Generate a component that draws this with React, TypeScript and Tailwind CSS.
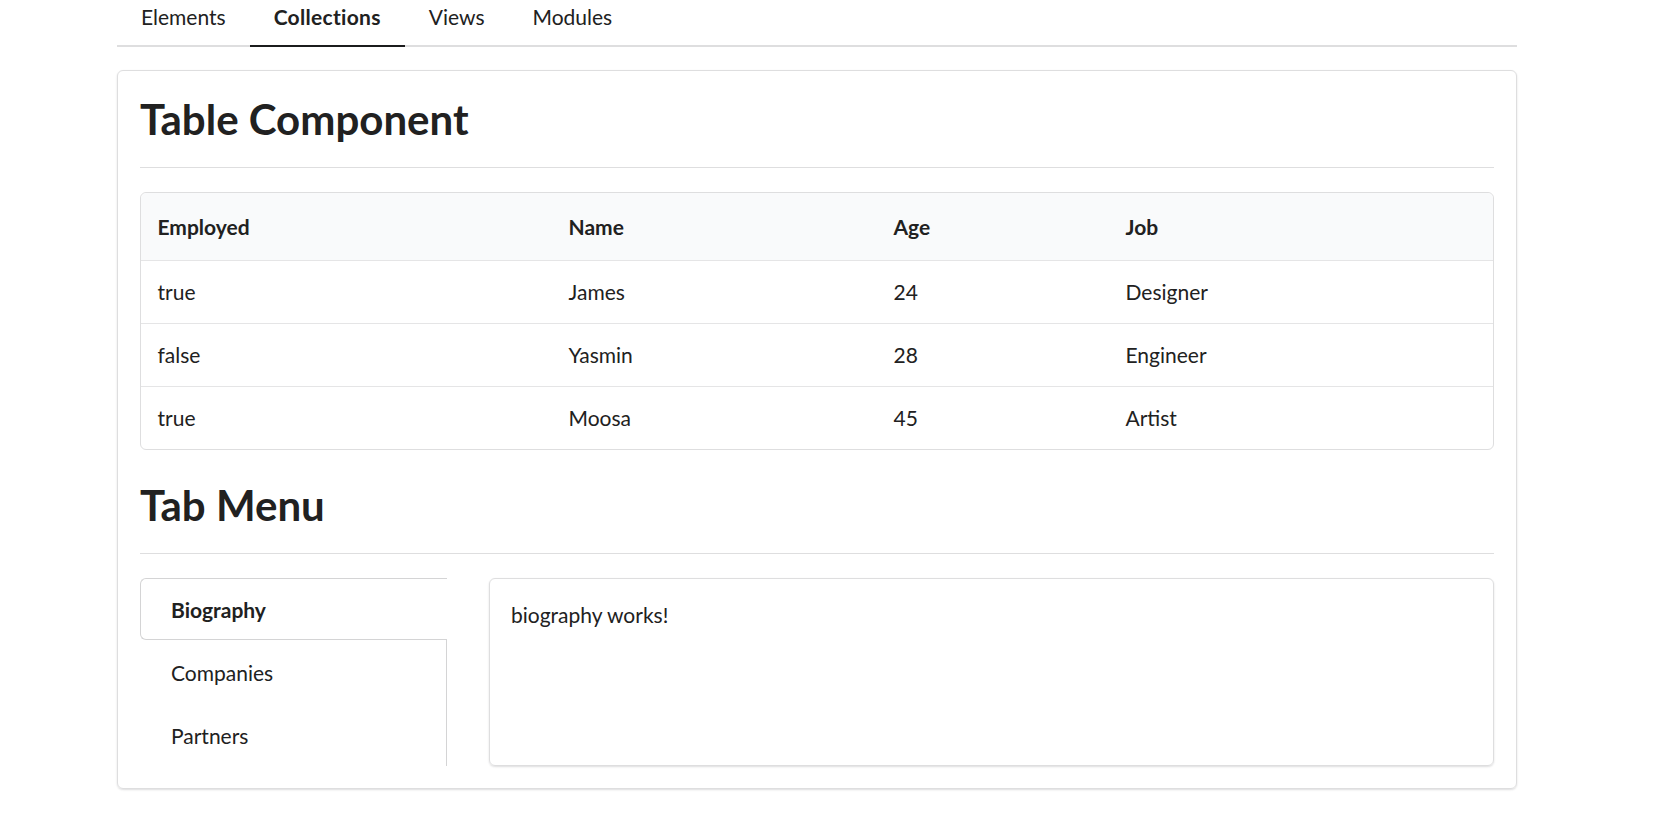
import React, { useState } from 'react';

const topTabs = ['Elements', 'Collections', 'Views', 'Modules'];

const rows = [
  { employed: 'true', name: 'James', age: 24, job: 'Designer' },
  { employed: 'false', name: 'Yasmin', age: 28, job: 'Engineer' },
  { employed: 'true', name: 'Moosa', age: 45, job: 'Artist' },
];

const sideTabs = ['Biography', 'Companies', 'Partners'];

function SectionHeader({ title, className = '' }: { title: string; className?: string }) {
  return (
    <h1
      className={`text-[42px] leading-[54px] font-bold text-[#212121] pb-[21px] border-b border-[#dededf] ${className}`}
    >
      {title}
    </h1>
  );
}

export default function App() {
  const [topActive, setTopActive] = useState('Collections');
  const [sideActive, setSideActive] = useState('Biography');

  return (
    <div className="min-h-screen bg-white font-['Lato',sans-serif] text-[21px] text-[#212121]">
      <div className="ml-[117px] w-[1400px]">
        <div className="-mt-[12px] flex border-b-2 border-[#dededf]">
          {topTabs.map(t => (
            <button
              key={t}
              onClick={() => setTopActive(t)}
              className={`-mb-[2px] px-[24px] py-[18px] leading-[21px] border-b-2 ${
                topActive === t ? 'border-[#1b1c1d] font-bold tracking-[0.3px]' : 'border-transparent'
              }`}
            >
              {t}
            </button>
          ))}
        </div>

        {/* Card */}
        <div className="mt-[23px] rounded-[6px] border border-[#dededf] shadow-[0_1px_2px_0_rgba(34,36,38,0.15)] px-[22px] pt-[21px] pb-[22px]">
          <SectionHeader title="Table Component" />

          <table className="mt-[24px] w-full table-fixed border-separate border-spacing-0 rounded-[6px] border border-[#dededf] text-left">
            <colgroup>
              <col className="w-[411px]" />
              <col className="w-[325px]" />
              <col className="w-[232px]" />
              <col />
            </colgroup>
            <thead>
              <tr>
                {['Employed', 'Name', 'Age', 'Job'].map((h, i) => (
                  <th
                    key={h}
                    className={`bg-[#f9fafb] px-[16.5px] py-[18.5px] leading-[30px] font-bold border-b border-[#e5e5e6] ${
                      i === 0 ? 'rounded-tl-[6px]' : ''
                    } ${i === 3 ? 'rounded-tr-[6px]' : ''}`}
                  >
                    {h}
                  </th>
                ))}
              </tr>
            </thead>
            <tbody>
              {rows.map((r, i) => (
                <tr key={r.name}>
                  {[r.employed, r.name, r.age, r.job].map((c, j) => (
                    <td
                      key={j}
                      className={`px-[16.5px] py-[16px] leading-[30px] ${i > 0 ? 'border-t border-[#e5e5e6]' : ''}`}
                    >
                      {c}
                    </td>
                  ))}
                </tr>
              ))}
            </tbody>
          </table>

          <SectionHeader title="Tab Menu" className="mt-[28px]" />

          <div className="mt-[24px] flex">
            <div className="w-[307px] flex flex-col border-r border-[#d4d4d5]">
              {sideTabs.map(t => (
                <button
                  key={t}
                  onClick={() => setSideActive(t)}
                  className={`text-left px-[30px] leading-[21px] border ${
                    sideActive === t
                      ? '-mr-px py-[19.5px] bg-white font-bold border-[#d4d4d5] border-r-0 rounded-l-[6px]'
                      : 'pt-[21px] pb-[19px] border-transparent'
                  }`}
                >
                  {t}
                </button>
              ))}
            </div>
            <div className="ml-[42px] flex-1 rounded-[6px] border border-[#dededf] shadow-[0_1px_2px_0_rgba(34,36,38,0.15)] p-[21px] leading-[30px]">
              {sideActive.toLowerCase()} works!
            </div>
          </div>
        </div>
      </div>
    </div>
  );
}
